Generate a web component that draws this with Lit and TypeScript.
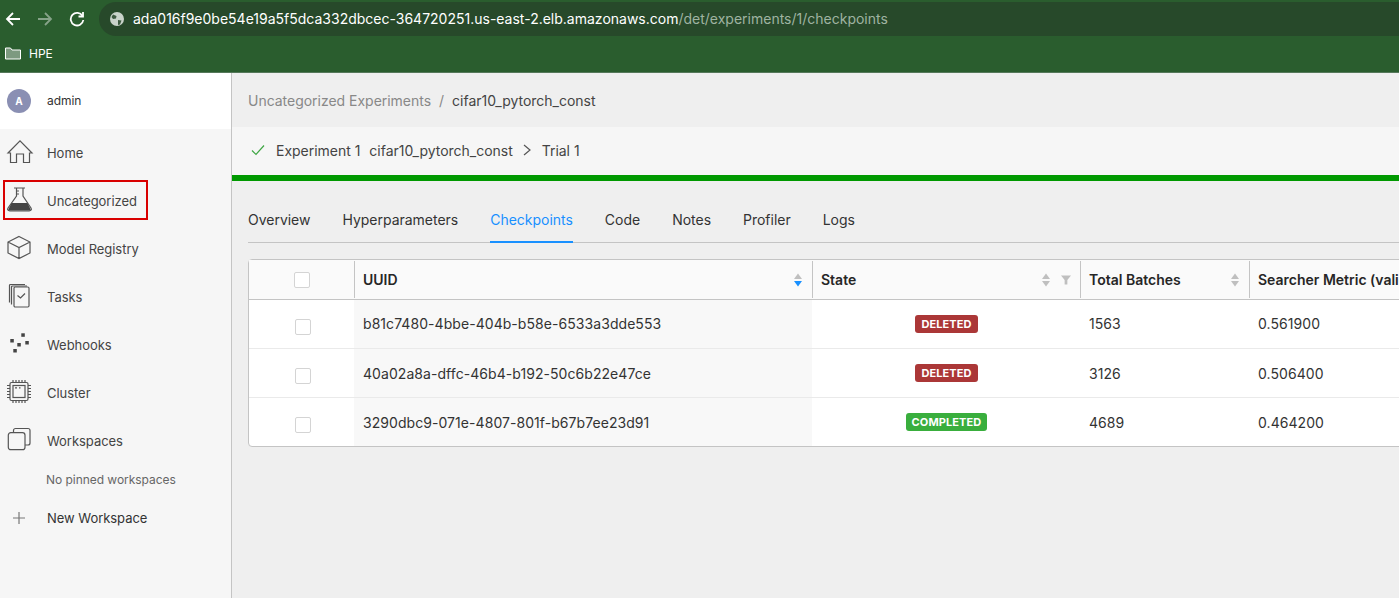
import { LitElement, html, css, svg } from "lit";
import { customElement } from "lit/decorators.js";

const icons: Record<string, unknown> = {
	home: svg`<path d="M1 13 13 .8 25 13h-2.500v9.500h-6V14h-7v8.500h-6V13z" />`,
	flask: svg`<path d="M7 0h11M9.500 0v8L1 20c-1 1.500 0 2.800 1.800 2.800h19.400c1.800 0 2.800-1.300 1.800-2.800L16 8V0M9.500 3h2.500M9.500 6h2.500" /><path class="solid" d="M4.500 15h16l3 6c.3.8-.2 1.300-1 1.300H2.500c-.8 0-1.300-.5-1-1.300z" />`,
	cube: svg`<path d="M12 .5 23 6v11l-11 5.500L1 17V6zM1 6l11 5.500L23 6M12 11.500v11" />`,
	tasks: svg`<path d="M18 .5H3.500a1 1 0 0 0-1 1v17M20 2H5.500a1 1 0 0 0-1 1v17.500" /><rect x="7" y="3" width="15" height="20" rx="1.200" /><path d="m10.500 11.500 3 2.500 4.500-4.500" />`,
	hooks: svg`<rect class="solid" x="3.300" y="7" width="3.500" height="3.500" /><rect class="solid" x="6.300" y="17" width="3.500" height="3.500" /><rect class="solid" x="10.300" y="11" width="3.500" height="3.500" /><rect class="solid" x="14.300" y="1.300" width="3.500" height="3.500" /><rect class="solid" x="18.300" y="9" width="3.500" height="3.500" />`,
	cluster: svg`<g transform="translate(-1 -1)"><rect x="4" y="3.500" width="18" height="18" rx="1.500" /><rect x="7" y="6.500" width="12" height="12" /><path d="M9 8.800h2M13 8.800h1.500M7 1v2.500M10 1v2.500M13 1v2.500M16 1v2.500M19 1v2.500M7 21.500V24M10 21.500V24M13 21.500V24M16 21.500V24M19 21.500V24M1 6.500h3M1 9.500h3M1 12.500h3M1 15.500h3M1 18.500h3M22 6.500h3M22 9.500h3M22 12.500h3M22 15.500h3M22 18.500h3" /></g>`,
	spaces: svg`<path d="M6.500 4.500V2.500a2 2 0 0 1 2-2H21a2 2 0 0 1 2 2V15a2 2 0 0 1-2 2h-3" /><rect x="1.300" y="4.700" width="16.700" height="17" rx="2.500" />`,
	plus: svg`<path d="M7 1v12M1 7h12" />`,
};

const navItems = [
	{ icon: "home", label: "Home" },
	{ icon: "flask", label: "Uncategorized" },
	{ icon: "cube", label: "Model Registry" },
	{ icon: "tasks", label: "Tasks" },
	{ icon: "hooks", label: "Webhooks" },
	{ icon: "cluster", label: "Cluster" },
	{ icon: "spaces", label: "Workspaces" },
];

const tabs = ["Overview", "Hyperparameters", "Checkpoints", "Code", "Notes", "Profiler", "Logs"];

const rows = [
	{ uuid: "b81c7480-4bbe-404b-b58e-6533a3dde553", state: "DELETED", batches: "1563", metric: "0.561900" },
	{ uuid: "40a02a8a-dffc-46b4-b192-50c6b22e47ce", state: "DELETED", batches: "3126", metric: "0.506400" },
	{ uuid: "3290dbc9-071e-4807-801f-b67b7ee23d91", state: "COMPLETED", batches: "4689", metric: "0.464200" },
];

@customElement("app-root")
export class AppRoot extends LitElement {
	static override styles = css`
		:host {
			display: block;
			width: 1399px;
			height: 598px;
			overflow: hidden;
			font-family: Inter, "Liberation Sans", sans-serif;
			font-size: 13px;
			color: #444;
			background: #efefef;
		}

		/* browser chrome */
		.chrome {
			height: 72px;
			background: #2a5d2e;
			border-bottom: 1px solid #55785a;
			color: #fff;
			display: flex;
			flex-direction: column;
		}
		.toolbar {
			display: flex;
			align-items: center;
			height: 38px;
		}
		.nav-btns {
			display: flex;
			align-items: center;
			width: 99px;
			flex: none;
			padding-left: 5px;
			box-sizing: border-box;
			gap: 16px;
		}
		.nav-btns svg {
			width: 16px;
			height: 16px;
			fill: none;
			stroke: #fff;
			stroke-width: 1.800;
		}
		.nav-btns svg.off {
			stroke: #86a389;
		}
		.url {
			flex: 1;
			height: 34px;
			box-sizing: border-box;
			background: #27492a;
			border-radius: 17px 0 0 17px;
			display: flex;
			align-items: center;
			padding: 0 0 1px 11px;
			gap: 9px;
			font-size: 14px;
			white-space: nowrap;
		}
		.url span {
			color: #9fb3a1;
		}
		.globe {
			width: 14px;
			height: 14px;
			flex: none;
		}
		.bookmarks {
			display: flex;
			align-items: center;
			gap: 8px;
			padding-left: 5px;
			height: 30px;
			box-sizing: border-box;
			font-size: 12px;
		}
		.bookmarks svg {
			width: 16px;
			height: 13px;
		}

		.layout {
			display: flex;
			height: 525px;
		}

		/* sidebar */
		.side {
			width: 232px;
			flex: none;
			box-sizing: border-box;
			background: #f6f6f6;
			border-right: 1px solid #c4c4c4;
			letter-spacing: -0.04px;
		}
		.user {
			height: 56px;
			background: #fff;
			display: flex;
			align-items: center;
			padding-left: 7px;
			gap: 16px;
			font-size: 12px;
			color: #333;
		}
		.user span {
			margin-bottom: 2px;
		}
		.avatar {
			width: 24px;
			height: 24px;
			border-radius: 50%;
			background: #8a8fb3;
			color: #fff;
			font-size: 10px;
			font-weight: 700;
			display: flex;
			align-items: center;
			justify-content: center;
		}
		.nav {
			height: 48px;
			display: flex;
			align-items: center;
			padding-left: 7px;
			gap: 14px;
		}
		.nav svg,
		.new svg {
			width: 26px;
			height: 26px;
			flex: none;
			fill: none;
			stroke: #555;
			stroke-width: 1.200;
			overflow: visible;
		}
		.nav svg .solid {
			fill: #444;
			stroke: none;
		}
		/* red annotation drawn over the screenshot */
		.boxed {
			position: absolute;
			left: 3px;
			top: 180px;
			width: 145px;
			height: 40px;
			box-sizing: border-box;
			border: 2px solid #d90000;
		}
		.pinned {
			padding-top: 7px;
			padding-left: 46px;
			height: 22px;
			font-size: 12px;
			color: #666;
		}
		.new {
			display: flex;
			align-items: center;
			height: 48px;
			padding-left: 12px;
			gap: 21px;
			color: #333;
		}
		.new svg {
			width: 14px;
			height: 14px;
			stroke: #777;
		}

		/* main column */
		.main {
			flex: 1;
			min-width: 0;
		}
		.crumbs {
			height: 54px;
			display: flex;
			align-items: center;
			padding-left: 16px;
			gap: 8px;
			font-size: 14px;
			letter-spacing: -0.02px;
			color: #888;
		}
		.crumbs b {
			font-weight: 400;
			color: #444;
		}
		.trial {
			height: 48px;
			box-sizing: border-box;
			background: #f6f6f6;
			display: flex;
			align-items: center;
			padding: 0 0 2px 19px;
			font-size: 14px;
			letter-spacing: -0.02px;
			color: #444;
			white-space: nowrap;
		}
		.trial .check {
			width: 14px;
			height: 12px;
			margin-right: 11px;
			fill: none;
			stroke: #3fa644;
			stroke-width: 1.200;
		}
		.trial .chev {
			width: 8px;
			height: 12px;
			margin: 0 11px 0 10px;
			fill: none;
			stroke: #555;
			stroke-width: 1.200;
		}
		.trial .name {
			margin-left: 9px;
		}
		.bar {
			height: 6px;
			background: #009900;
		}
		.tabs {
			display: flex;
			gap: 32px;
			margin-left: 16px;
			height: 62px;
			box-sizing: border-box;
			border-bottom: 1px solid #c4c4c4;
			font-size: 14px;
			letter-spacing: -0.015px;
			color: #333;
		}
		.tab {
			display: flex;
			align-items: center;
			padding-top: 15px;
			box-sizing: border-box;
		}
		.tab.on {
			color: #1890ff;
			border-bottom: 2px solid #1890ff;
			height: 62px;
			padding-top: 17px;
		}

		/* table */
		.table {
			margin: 16px 0 0 16px;
			width: 1300px;
			border: 1px solid #c4c4c4;
			border-radius: 4px;
			background: #fff;
			font-size: 14px;
			letter-spacing: 0.06px;
			color: #333;
		}
		.row {
			display: grid;
			grid-template-columns: 105px 458px 268px 169px 1fr;
			height: 49px;
			border-top: 1px solid #eaeaea;
			box-sizing: border-box;
		}
		.row.head {
			height: 40px;
			border-top: 0;
			background: #fafafa;
			border-bottom: 1px solid #c4c4c4;
			font-weight: 600;
			letter-spacing: 0;
			color: #262626;
		}
		.row.head + .row {
			border-top: 0;
			height: 48px;
		}
		.row.head + .row .text {
			padding-bottom: 1px;
		}
		.cell {
			display: flex;
			align-items: center;
			padding: 0 9px;
			min-width: 0;
			white-space: nowrap;
		}
		.head .cell {
			margin: 1px 0;
			padding: 0 10px 0 8px;
			border-left: 1px solid #c4c4c4;
		}
		.head .cell:first-child {
			border-left: 0;
		}
		.cell.pick {
			justify-content: center;
			padding: 0;
		}
		.cell.sorted {
			background: #f8f8f8;
		}
		.cell.center {
			justify-content: center;
			padding-left: 10px;
		}
		.box {
			width: 14px;
			height: 14px;
			background: #fff;
			border: 1px solid #d4d4d4;
			border-radius: 2px;
		}
		.box.low {
			margin: 6px 0 0 2px;
		}
		.spacer {
			flex: 1;
		}
		.sort {
			width: 8px;
			height: 14px;
			flex: none;
		}
		.filter {
			width: 10px;
			height: 10px;
			flex: none;
			margin-left: 11px;
			margin-right: -1px;
		}
		.tag {
			height: 18px;
			line-height: 18px;
			padding: 0 6px;
			border-radius: 3px;
			font-size: 11px;
			font-weight: 700;
			color: #fff;
			letter-spacing: 0.1px;
		}
		.tag.DELETED {
			background: #ab3737;
		}
		.tag.COMPLETED {
			background: #39ae3d;
		}
	`;

	private sortIcon(active = false) {
		return html`<svg class="sort" viewBox="0 0 8 14">
			<path d="M4 .5 8 6H0z" fill="#bfbfbf" />
			<path d="M4 13.500 0 8h8z" fill=${active ? "#1890ff" : "#bfbfbf"} />
		</svg>`;
	}

	override render() {
		return html`
			<div class="chrome">
				<div class="toolbar">
					<div class="nav-btns">
						<svg viewBox="0 0 16 16"><path d="M15 8H2M8 2 2 8l6 6" /></svg>
						<svg class="off" viewBox="0 0 16 16"><path d="M1 8h13M8 2l6 6-6 6" /></svg>
						<svg viewBox="0 0 16 16">
							<path d="M13.500 5A6.300 6.300 0 1 0 14.300 9" />
							<path d="M14 1v4.500H9.500" />
						</svg>
					</div>
					<div class="url">
						<svg class="globe" viewBox="0 0 14 14">
							<circle cx="7" cy="7" r="7" fill="#c9d3ca" />
							<path d="M3 2.500 6.500 4 6 6.500 3 7 1.500 5zM8 8l3.500.5-1.500 4L8 13z" fill="#3d5a40" />
						</svg>
						<div>ada016f9e0be54e19a5f5dca332dbcec-364720251.us-east-2.elb.amazonaws.com<span>/det/experiments/1/checkpoints</span></div>
					</div>
				</div>
				<div class="bookmarks">
					<svg viewBox="0 0 16 13">
						<path d="M.5 12V1h5l1.500 2h8.500v9z" fill="#7d9a80" stroke="#fff" />
					</svg>
					HPE
				</div>
			</div>
			<div class="layout">
				<aside class="side">
					<div class="user"><div class="avatar">A</div><span>admin</span></div>
					<div>
						${navItems.map(
							(n) => html`<div class="nav">
								<svg viewBox="0 0 26 26">${icons[n.icon]}</svg>
								<span>${n.label}</span>
							</div>`,
						)}
					</div>
					<div class="pinned">No pinned workspaces</div>
					<div class="new">
						<svg viewBox="0 0 14 14">${icons.plus}</svg>
						New Workspace
					</div>
				</aside>
				<main class="main">
					<div class="crumbs">Uncategorized Experiments <span>/</span> <b>cifar10_pytorch_const</b></div>
					<div class="trial">
						<svg class="check" viewBox="0 0 14 12"><path d="M1 6.500 5 10.500 13 1.500" /></svg>
						Experiment 1
						<span class="name">cifar10_pytorch_const</span>
						<svg class="chev" viewBox="0 0 8 12"><path d="M1 1l6 5-6 5" /></svg>
						Trial 1
					</div>
					<div class="bar"></div>
					<div class="tabs">
						${tabs.map(
							(t) => html`<div class="tab ${t === "Checkpoints" ? "on" : ""}">${t}</div>`,
						)}
					</div>
					<div class="table">
						<div class="row head">
							<div class="cell pick"><div class="box"></div></div>
							<div class="cell">UUID<span class="spacer"></span>${this.sortIcon(true)}</div>
							<div class="cell">
								State<span class="spacer"></span>${this.sortIcon()}
								<svg class="filter" viewBox="0 0 11 10"><path d="M0 0h11L7 5v5H4V5z" fill="#bfbfbf" /></svg>
							</div>
							<div class="cell">Total Batches<span class="spacer"></span>${this.sortIcon()}</div>
							<div class="cell">Searcher Metric (validation_error)</div>
						</div>
						${rows.map(
							(r) => html`<div class="row">
								<div class="cell pick"><div class="box low"></div></div>
								<div class="cell sorted text">${r.uuid}</div>
								<div class="cell center"><span class="tag ${r.state}">${r.state}</span></div>
								<div class="cell text">${r.batches}</div>
								<div class="cell text">${r.metric}</div>
							</div>`,
						)}
					</div>
				</main>
			</div>
			<div class="boxed"></div>
		`;
	}
}
